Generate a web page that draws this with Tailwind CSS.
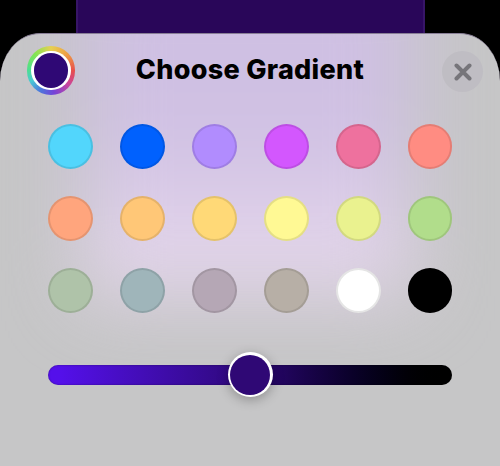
<!DOCTYPE html>
<html lang="en">
<head>
<meta charset="utf-8">
<title>Choose Gradient</title>
<script src="https://cdn.jsdelivr.net/npm/@tailwindcss/browser@4"></script>
</head>
<body class="bg-black overflow-hidden">
<div class="w-[500px] h-[466px] flex flex-col overflow-hidden bg-black font-['Inter',sans-serif]">
  <div class="ml-[76px] w-[349px] h-[33px] shrink-0 bg-[#290659] border-x-2 border-[#371567]"></div>
  <main class="relative isolate flex-1 flex flex-col overflow-hidden bg-[#c6c6c7] rounded-t-[40px_48px] border-t border-[#887e96]">
    <div class="absolute -z-10 left-[84px] -top-[80px] w-[328px] h-[342px] blur-[38px] bg-linear-to-b from-[#cfc0e3] from-50% to-[#e4d6eb] to-90%"></div>
    <header class="grid grid-cols-[60px_1fr_60px] items-start pl-[26.5px] pr-[17px] pt-[12px]">
      <button aria-label="Current color" class="size-[48.5px] rounded-full p-[4.5px] bg-[conic-gradient(#e6d052,#eea044_12%,#e8504c_25%,#c844a0_36%,#7444d8_48%,#4c78dc_58%,#48c8d4_67%,#4ee08c_76%,#84e452_88%,#e6d052)]">
        <span class="block size-full rounded-full bg-white p-[2.5px]"><span class="block size-full rounded-full bg-[#2f0875]"></span></span>
      </button>
      <h1 class="-ml-[9.5px] mt-[7px] text-center text-[27px] leading-[34px] font-extrabold text-black tracking-[0.3px] whitespace-nowrap">Choose Gradient</h1>
      <button aria-label="Close" class="justify-self-end mt-[5px] size-[41px] rounded-full bg-[#bfbdc3] flex items-center justify-center">
        <svg class="size-[18px]" viewBox="0 0 18 18" fill="none" stroke="#76757a" stroke-width="4" stroke-linecap="round"><path d="M2.5 2.5 15.5 15.5M15.5 2.5 2.5 15.5"/></svg>
      </button>
    </header>
    <section class="ml-12 mt-[29.5px] grid grid-cols-[repeat(6,72px)] auto-rows-[72px]">
      <i class="block size-[45.4px] rounded-full border-2 border-black/10 bg-[#52d6fc]"></i>
      <i class="block size-[45.4px] rounded-full border-2 border-black/10 bg-[#0061fe]"></i>
      <i class="block size-[45.4px] rounded-full border-2 border-black/10 bg-[#b18cfe]"></i>
      <i class="block size-[45.4px] rounded-full border-2 border-black/10 bg-[#d357fe]"></i>
      <i class="block size-[45.4px] rounded-full border-2 border-black/10 bg-[#ee719e]"></i>
      <i class="block w-[44px] h-[45.4px] rounded-full border-2 border-black/10 bg-[#ff8c82]"></i>
      <i class="block size-[45.4px] rounded-full border-2 border-black/10 bg-[#ffa57d]"></i>
      <i class="block size-[45.4px] rounded-full border-2 border-black/10 bg-[#ffc777]"></i>
      <i class="block size-[45.4px] rounded-full border-2 border-black/10 bg-[#ffd977]"></i>
      <i class="block size-[45.4px] rounded-full border-2 border-black/10 bg-[#fff994]"></i>
      <i class="block size-[45.4px] rounded-full border-2 border-black/10 bg-[#eaf28f]"></i>
      <i class="block w-[44px] h-[45.4px] rounded-full border-2 border-black/10 bg-[#b1dd8b]"></i>
      <i class="block size-[45.4px] rounded-full border-2 border-black/10 bg-[#afc3a9]"></i>
      <i class="block size-[45.4px] rounded-full border-2 border-black/10 bg-[#9fb5ba]"></i>
      <i class="block size-[45.4px] rounded-full border-2 border-black/10 bg-[#b5a7b5]"></i>
      <i class="block size-[45.4px] rounded-full border-2 border-black/10 bg-[#b7afa6]"></i>
      <i class="block size-[45.4px] rounded-full border-2 border-black/10 bg-white"></i>
      <i class="block w-[44px] h-[45.4px] rounded-full border-2 border-black/10 bg-black"></i>
    </section>
    <div class="mx-12 mt-[24.5px] h-[20.5px] shrink-0 rounded-full flex items-center justify-center bg-linear-to-r from-[#5410ea] from-3% via-[#2d0878] to-black shadow-[inset_0_0_2px_rgba(0,0,0,0.4)]">
      <div class="size-[45px] shrink-0 rounded-full bg-white p-[2.5px] shadow-[0_3px_12px_rgba(0,0,0,0.28)]"><div class="size-full rounded-full bg-[#2f0875]"></div></div>
    </div>
  </main>
</div>
</body>
</html>
